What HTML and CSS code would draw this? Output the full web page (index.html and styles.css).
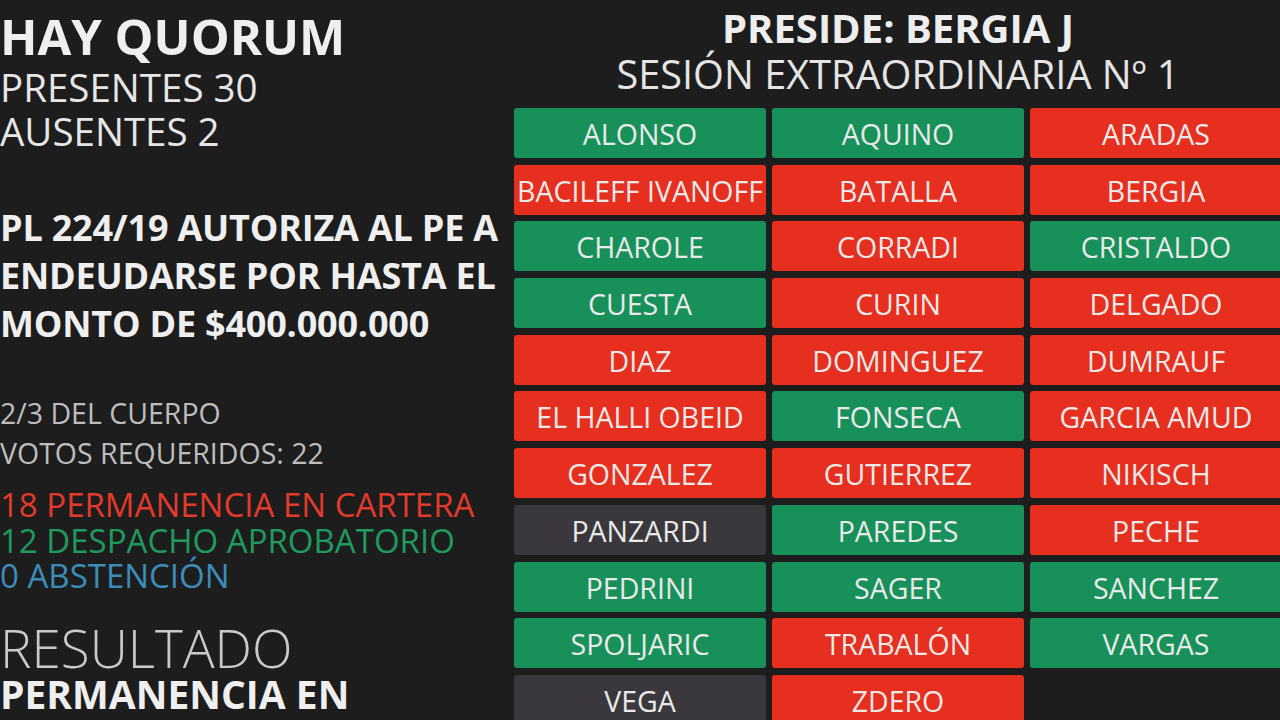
FILE: index.html
```html
<!DOCTYPE html>
<html lang="es">
<head>
<meta charset="utf-8">
<title>Votación</title>
<link rel="stylesheet" href="styles.css">
</head>
<body>
<div class="board">
  <section class="info">
    <div class="quorum">HAY QUORUM</div>
    <div class="count">PRESENTES 30</div>
    <div class="count">AUSENTES 2</div>
    <div class="bill">
      <div class="bill-line">PL 224/19 AUTORIZA AL PE A</div>
      <div class="bill-line">ENDEUDARSE POR HASTA EL</div>
      <div class="bill-line">MONTO DE $400.000.000</div>
    </div>
    <div class="req">
      <div class="req-line">2/3 DEL CUERPO</div>
      <div class="req-line">VOTOS REQUERIDOS: 22</div>
    </div>
    <div class="tally">
      <div class="tally-line red">18 PERMANENCIA EN CARTERA</div>
      <div class="tally-line green">12 DESPACHO APROBATORIO</div>
      <div class="tally-line blue">0 ABSTENCIÓN</div>
    </div>
    <div class="result-label">RESULTADO</div>
    <div class="result-value">PERMANENCIA EN</div>
  </section>
  <section class="panel">
    <div class="presides">PRESIDE: BERGIA J</div>
    <div class="session">SESIÓN EXTRAORDINARIA Nº 1</div>
    <div class="grid">
      <div class="cell yes">ALONSO</div>
      <div class="cell yes">AQUINO</div>
      <div class="cell no">ARADAS</div>
      <div class="cell no">BACILEFF IVANOFF</div>
      <div class="cell no">BATALLA</div>
      <div class="cell no">BERGIA</div>
      <div class="cell yes">CHAROLE</div>
      <div class="cell no">CORRADI</div>
      <div class="cell yes">CRISTALDO</div>
      <div class="cell yes">CUESTA</div>
      <div class="cell no">CURIN</div>
      <div class="cell no">DELGADO</div>
      <div class="cell no">DIAZ</div>
      <div class="cell no">DOMINGUEZ</div>
      <div class="cell no">DUMRAUF</div>
      <div class="cell no">EL HALLI OBEID</div>
      <div class="cell yes">FONSECA</div>
      <div class="cell no">GARCIA AMUD</div>
      <div class="cell no">GONZALEZ</div>
      <div class="cell no">GUTIERREZ</div>
      <div class="cell no">NIKISCH</div>
      <div class="cell absent">PANZARDI</div>
      <div class="cell yes">PAREDES</div>
      <div class="cell no">PECHE</div>
      <div class="cell yes">PEDRINI</div>
      <div class="cell yes">SAGER</div>
      <div class="cell yes">SANCHEZ</div>
      <div class="cell yes">SPOLJARIC</div>
      <div class="cell no">TRABALÓN</div>
      <div class="cell yes">VARGAS</div>
      <div class="cell absent">VEGA</div>
      <div class="cell no">ZDERO</div>
    </div>
  </section>
</div>
</body>
</html>
```
FILE: styles.css
```css
html, body {
  margin: 0;
  padding: 0;
  background: #1d1d1d;
  overflow: hidden;
}
body {
  width: 1280px;
  height: 720px;
  font-family: "Open Sans", "Noto Sans", sans-serif;
  color: #ececec;
}
.board {
  display: flex;
  width: 1280px;
  height: 720px;
}
.info {
  width: 514px;
  flex: none;
  padding-top: 7px;
  white-space: nowrap;
}
.quorum {
  font-size: 49px;
  font-weight: 700;
  line-height: 58px;
  color: #efefef;
}
.count {
  font-size: 38.5px;
  line-height: 44px;
  color: #e6e6e6;
}
.bill {
  margin-top: 51px;
}
.bill-line {
  font-size: 36px;
  font-weight: 700;
  letter-spacing: -0.2px;
  line-height: 48px;
  color: #efefef;
}
.req {
  margin-top: 45px;
}
.req-line {
  font-size: 28.5px;
  line-height: 40px;
  color: #bdbdbd;
}
.tally {
  margin-top: 14px;
}
.tally-line {
  font-size: 33px;
  line-height: 35.5px;
}
.red { color: #e23a2b; }
.green { color: #1f9a5d; }
.blue { color: #3a8dba; }
.result-label {
  margin-top: 28px;
  font-size: 53px;
  font-weight: 300;
  line-height: 52px;
  color: #c9c9c9;
}
.result-value {
  font-size: 39px;
  font-weight: 700;
  line-height: 40px;
  color: #efefef;
}
.panel {
  flex: 1;
  padding-top: 5px;
  text-align: center;
  white-space: nowrap;
}
.presides {
  font-size: 40px;
  font-weight: 700;
  line-height: 46px;
  color: #eeeeee;
}
.session {
  font-size: 39.7px;
  font-weight: 400;
  line-height: 46px;
  color: #e4e4e4;
}
.grid {
  margin-top: 11px;
  display: grid;
  grid-template-columns: repeat(3, 252px);
  grid-auto-rows: 50px;
  column-gap: 6px;
  row-gap: 6.7px;
}
.cell {
  border-radius: 3px;
  font-size: 28.5px;
  line-height: 47px;
  padding-top: 3px;
  color: #e9e9e9;
  overflow: hidden;
}
.yes { background: #17905a; }
.no { background: #e62f1f; }
.absent { background: #3a383c; }
```
